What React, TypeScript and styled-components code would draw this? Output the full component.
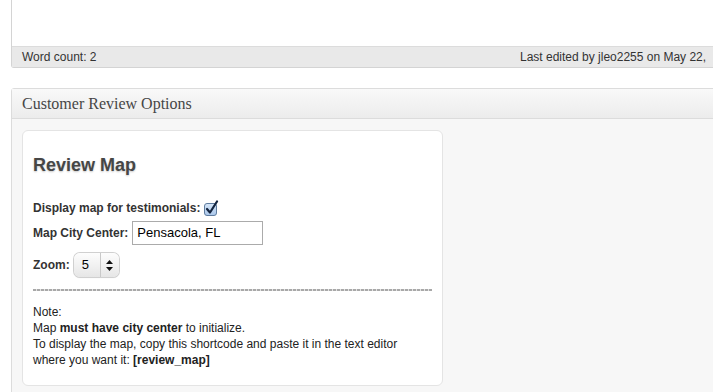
import React from 'react';
import styled, { createGlobalStyle } from 'styled-components';

const GlobalStyle = createGlobalStyle`
  html, body {
    margin: 0;
    padding: 0;
    overflow: hidden;
    background: #ffffff;
    font-family: "Liberation Sans", Arial, Helvetica, sans-serif;
    color: #333333;
  }
`;

const Page = styled.div`
  width: 820px;
  padding-left: 11px;
  height: 392px;
  overflow: hidden;
`;

const EditorBox = styled.div`
  border: 1px solid #d4d4d4;
  border-top: none;
  border-radius: 0 0 0 3px;
`;

const EditorArea = styled.div`
  height: 46px;
  background: #ffffff;
`;

const StatusBar = styled.div`
  display: flex;
  height: 20px;
  line-height: 20px;
  padding: 0 10px;
  font-size: 12px;
  color: #333;
  background: #e9e9e9;
  border-top: 1px solid #dcdcdc;
  white-space: nowrap;
`;

const WordCount = styled.span`
  width: 498px;
  flex-shrink: 0;
`;

const Postbox = styled.div`
  margin-top: 20px;
  border: 1px solid #dcdcdc;
  border-radius: 3px 0 0 0;
  background: #f7f7f7;
  height: 400px;
`;

const PostboxHeader = styled.h3`
  margin: 0;
  height: 29px;
  line-height: 29px;
  padding-left: 10px;
  font-family: "Liberation Serif", Georgia, serif;
  font-weight: normal;
  font-size: 16px;
  color: #464646;
  background: linear-gradient(to bottom, #f9f9f9, #ececec);
  border-bottom: 1px solid #dcdcdc;
`;

const PostboxBody = styled.div`
  padding: 11px 10px;
`;

const Card = styled.div`
  width: 399px;
  padding: 23px 10px 17px 10px;
  background: #ffffff;
  border: 1px solid #e4e4e4;
  border-radius: 6px;
`;

const Title = styled.h2`
  margin: 0 0 24px 0;
  font-size: 18px;
  line-height: 22px;
  font-weight: bold;
  color: #464646;
  text-shadow: 0 1px 2px rgba(0, 0, 0, 0.22);
`;

const Row = styled.div<{ $gap: number }>`
  display: flex;
  align-items: center;
  gap: 4px;
  margin-bottom: ${p => p.$gap}px;
  font-size: 12px;
  font-weight: bold;
  color: #333;
`;

const TextInput = styled.div`
  width: 121px;
  height: 22px;
  line-height: 22px;
  padding: 0 4px;
  border: 1px solid #ababab;
  font-size: 13px;
  font-weight: normal;
  color: #000;
  background: #fff;
`;

const Select = styled.div`
  display: flex;
  align-items: center;
  width: 45px;
  height: 24px;
  margin-left: 0;
  border-radius: 6px;
  background: linear-gradient(to bottom, #fdfdfd, #e6e6e6);
  box-shadow: 0 0 0 1px #d0d0d0, 0 1px 1px rgba(0, 0, 0, 0.15);
  font-size: 13px;
  font-weight: normal;
  color: #000;
`;

const SelectValue = styled.span`
  width: 27px;
  padding-left: 8px;
  box-sizing: border-box;
  border-right: 1px solid #c9c9c9;
  height: 24px;
  line-height: 24px;
`;

const SelectArrows = styled.span`
  flex: 1;
  display: flex;
  justify-content: center;
`;

const Divider = styled.div`
  margin: 0 0 13px 0;
  height: 2px;
  background: repeating-linear-gradient(to right, #a8a8a8 0 3px, #e2e2e2 3px 4px);
`;

const Note = styled.div`
  font-size: 12px;
  line-height: 16px;
  color: #222;
`;

const Checkbox = () => (
  <svg width="15" height="16" viewBox="0 0 15 16">
    <defs>
      <linearGradient id="cb" x1="0" y1="0" x2="0" y2="1">
        <stop offset="0" stopColor="#d6e6f8" />
        <stop offset="1" stopColor="#a9c6ea" />
      </linearGradient>
    </defs>
    <rect x="0.5" y="3.5" width="12" height="12" rx="2.5" fill="url(#cb)" stroke="#5f7c9e" />
    <path d="M3 9 L6 12.5 L13 1.5" fill="none" stroke="#13243f" strokeWidth="2.2" strokeLinecap="round" strokeLinejoin="round" />
  </svg>
);

const Arrows = () => (
  <svg width="7" height="11" viewBox="0 0 7 11">
    <path d="M3.5 0 L7 4 L0 4 Z" fill="#111" />
    <path d="M3.5 11 L7 7 L0 7 Z" fill="#111" />
  </svg>
);

const App: React.FC = () => {
  return (
    <>
      <GlobalStyle />
      <Page>
        <EditorBox>
          <EditorArea />
          <StatusBar>
            <WordCount>Word count: 2</WordCount>
            <span>Last edited by jleo2255 on May 22,</span>
          </StatusBar>
        </EditorBox>
        <Postbox>
          <PostboxHeader>Customer Review Options</PostboxHeader>
          <PostboxBody>
            <Card>
              <Title>Review Map</Title>
              <Row $gap={5}>
                Display map for testimonials: <Checkbox />
              </Row>
              <Row $gap={8}>
                Map City Center: <TextInput>Pensacola, FL</TextInput>
              </Row>
              <Row $gap={12}>
                Zoom:
                <Select>
                  <SelectValue>5</SelectValue>
                  <SelectArrows><Arrows /></SelectArrows>
                </Select>
              </Row>
              <Divider />
              <Note>
                Note:<br />
                Map <b>must have city center</b> to initialize.<br />
                To display the map, copy this shortcode and paste it in the text editor<br />
                where you want it: <b>[review_map]</b>
              </Note>
            </Card>
          </PostboxBody>
        </Postbox>
      </Page>
    </>
  );
};

export default App;
